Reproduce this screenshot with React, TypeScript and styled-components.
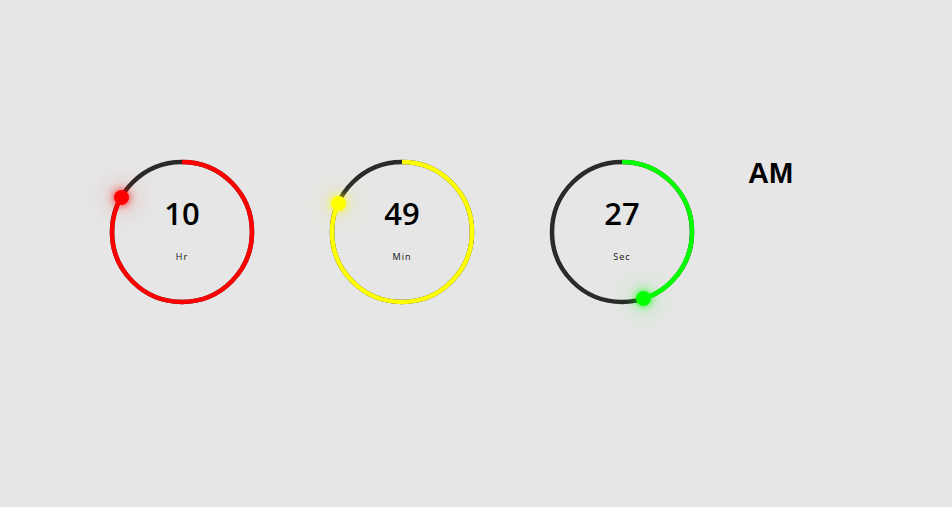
import React from "react";
import styled, { createGlobalStyle } from "styled-components";

const Global = createGlobalStyle`
  html, body { margin: 0; padding: 0; background: #e6e6e6; }
  body { width: 952px; height: 507px; overflow: hidden; font-family: "Open Sans", "Noto Sans", sans-serif; }
`;

const Page = styled.div`
  display: flex;
  align-items: flex-start;
  padding: 157px 0 0 107px;
`;

const Clocks = styled.div`
  display: flex;
  gap: 70px;
`;

const Dial = styled.div`
  position: relative;
  width: 150px;
  height: 150px;
  display: grid;
`;

const Ring = styled.svg`
  grid-area: 1 / 1;
  width: 150px;
  height: 150px;
  transform: rotate(-90deg);
`;

const Readout = styled.div`
  grid-area: 1 / 1;
  display: flex;
  flex-direction: column;
  align-items: center;
  padding-top: 38px;
`;

const Value = styled.div`
  font-family: "Open Sans", sans-serif;
  font-size: 31px;
  font-weight: 600;
  line-height: 36px;
  color: #000;
`;

const Label = styled.div`
  margin-top: 20px;
  font-family: "Open Sans", sans-serif;
  font-size: 9px;
  line-height: 12px;
  letter-spacing: 1px;
  color: #111;
`;

const Dot = styled.div<{ $c: string }>`
  position: absolute;
  width: 15px;
  height: 15px;
  margin: -7.5px 0 0 -7.5px;
  border-radius: 50%;
  background: ${(p) => p.$c};
  box-shadow: 0 0 10px ${(p) => p.$c}, 0 0 30px ${(p) => p.$c}77, 0 0 70px ${(p) => p.$c}30;
`;

const Meridiem = styled.div`
  margin: -1px 0 0 51px;
  font-family: "Liberation Sans", Arial, sans-serif;
  font-weight: 700;
  font-size: 29px;
  line-height: 34px;
  color: #000;
`;

const R = 70;
const C = 2 * Math.PI * R;

function Clock({ value, max, label, color }: { value: number; max: number; label: string; color: string }) {
  const p = value / max;
  const a = p * 2 * Math.PI;
  const x = 75 + R * Math.sin(a);
  const y = 75 - R * Math.cos(a);
  return (
    <Dial>
      <Ring viewBox="0 0 150 150">
        <circle cx="75" cy="75" r={R} fill="none" stroke="#2a2a2a" strokeWidth="4.5" />
        <circle
          cx="75"
          cy="75"
          r={R}
          fill="none"
          stroke={color}
          strokeWidth="4.5"
          strokeDasharray={C}
          strokeDashoffset={C * (1 - p)}
        />
      </Ring>
      <Readout>
        <Value>{String(value).padStart(2, "0")}</Value>
        <Label>{label}</Label>
      </Readout>
      <Dot $c={color} style={{ left: x, top: y }} />
    </Dial>
  );
}

export default function App() {
  return (
    <>
      <Global />
      <Page>
        <Clocks>
          <Clock value={10} max={12} label="Hr" color="#ff0000" />
          <Clock value={49} max={60} label="Min" color="#ffff00" />
          <Clock value={27} max={60} label="Sec" color="#04ff00" />
        </Clocks>
        <Meridiem>AM</Meridiem>
      </Page>
    </>
  );
}
